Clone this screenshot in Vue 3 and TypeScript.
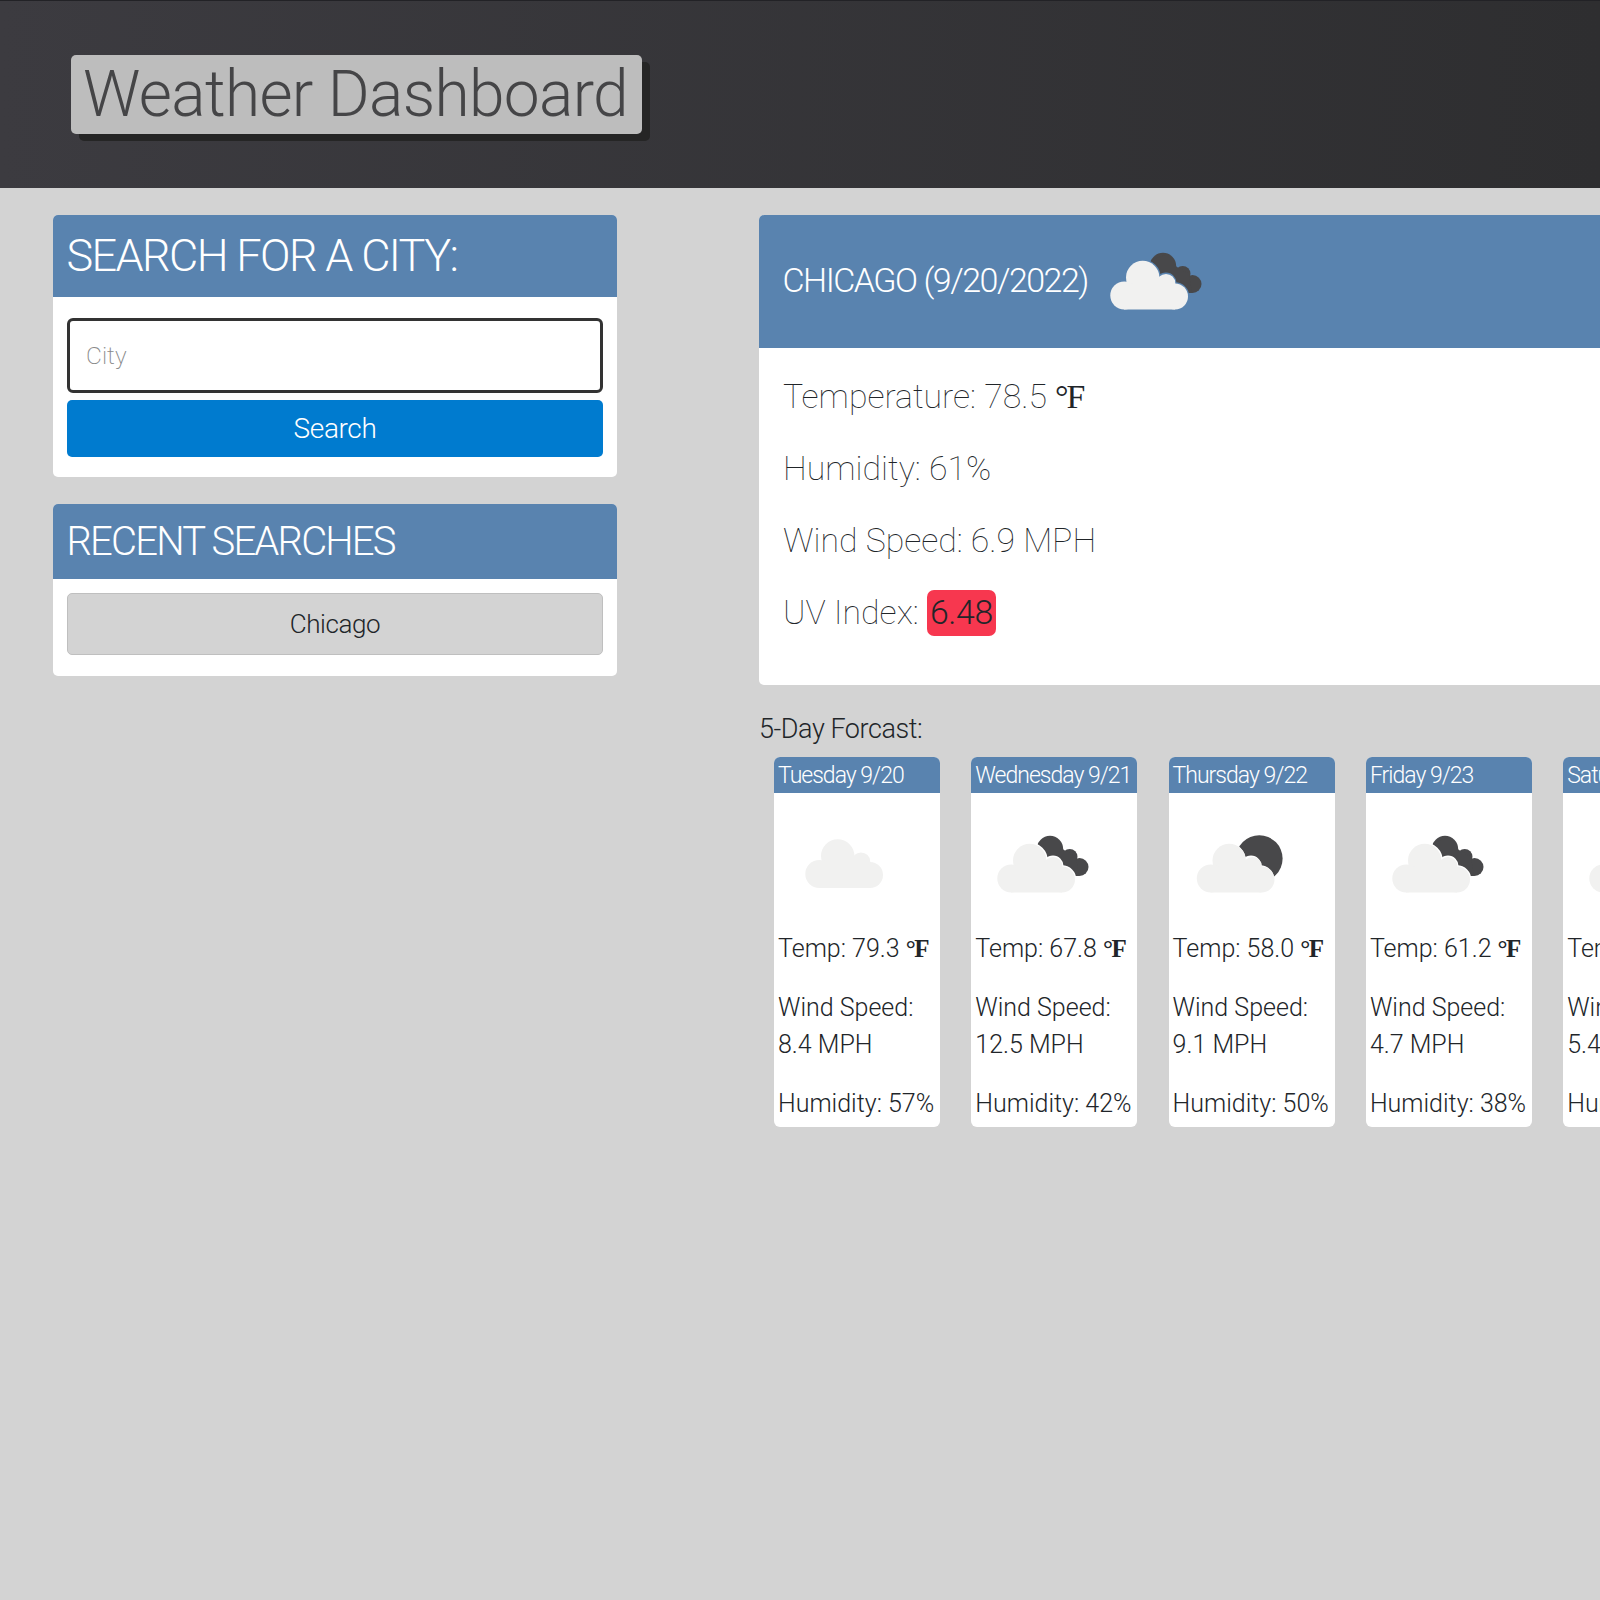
<script setup lang="ts">
type Icon = 'scattered' | 'broken' | 'few'
interface Day { date: string; temp: string; wind: string; humidity: string; icon: Icon }
const days: Day[] = [
  { date: 'Tuesday 9/20', temp: '79.3', wind: '8.4', humidity: '57', icon: 'scattered' },
  { date: 'Wednesday 9/21', temp: '67.8', wind: '12.5', humidity: '42', icon: 'broken' },
  { date: 'Thursday 9/22', temp: '58.0', wind: '9.1', humidity: '50', icon: 'few' },
  { date: 'Friday 9/23', temp: '61.2', wind: '4.7', humidity: '38', icon: 'broken' },
  { date: 'Saturday 9/24', temp: '59.4', wind: '5.4', humidity: '44', icon: 'broken' }
]
const stats = ['Humidity: 61%', 'Wind Speed: 6.9 MPH']
</script>

<template>
  <div class="page">
    <svg class="defs" width="0" height="0" aria-hidden="true">
      <defs>
        <g id="cloud-shape">
          <circle cx="42.7" cy="43" r="16.7" />
          <circle cx="66" cy="48.7" r="9.3" />
          <circle cx="24.3" cy="61" r="14" />
          <circle cx="75" cy="62" r="13" />
          <rect x="24" y="50" width="51" height="25" />
        </g>
        <g id="dark-shape">
          <circle cx="58" cy="36" r="13.2" />
          <circle cx="77.7" cy="43.8" r="7.8" />
          <circle cx="87.5" cy="54" r="9" />
          <path d="M46 30 L60 25 L72 37 L84 44 L87 63 L60 63 Z" />
        </g>
        <mask id="cut-cloud" maskUnits="userSpaceOnUse" x="0" y="0" width="100" height="100">
          <rect x="0" y="0" width="100" height="100" fill="#fff" />
          <use href="#cloud-shape" transform="translate(-5 4.5)" fill="#000" stroke="#000" stroke-width="2.6" />
        </mask>
      </defs>
    </svg>

    <header class="top">
      <h1 class="brand">Weather Dashboard</h1>
    </header>

    <main class="content">
      <aside class="side">
        <section class="card">
          <h2 class="card-head head-search">SEARCH FOR A CITY:</h2>
          <div class="card-body body-search">
            <input class="city" type="text" placeholder="City" />
            <button class="go" type="button">Search</button>
          </div>
        </section>
        <section class="card">
          <h2 class="card-head head-recent">RECENT SEARCHES</h2>
          <div class="card-body body-recent">
            <button class="recent" type="button">Chicago</button>
          </div>
        </section>
      </aside>

      <section class="results">
        <div class="card today">
          <div class="today-head">
            <h3 class="today-title">CHICAGO (9/20/2022)</h3>
            <svg class="icon" viewBox="0 0 100 100">
              <use href="#dark-shape" mask="url(#cut-cloud)" fill="#48484a" />
              <use href="#cloud-shape" transform="translate(-5 4.5)" fill="#f1f1f0" />
            </svg>
          </div>
          <div class="today-body">
            <p class="stat">Temperature: 78.5 <span class="deg deg-large">°F</span></p>
            <p v-for="s in stats" :key="s" class="stat">{{ s }}</p>
            <p class="stat">UV Index: <span class="uv">6.48</span></p>
          </div>
        </div>

        <p class="forecast-label">5-Day Forcast:</p>
        <div class="forecast">
          <article v-for="d in days" :key="d.date" class="day">
            <div class="day-head">{{ d.date }}</div>
            <div class="day-body">
              <svg class="icon day-icon" viewBox="0 0 100 100">
                <template v-if="d.icon === 'broken'">
                  <use href="#dark-shape" mask="url(#cut-cloud)" fill="#48484a" />
                  <use href="#cloud-shape" transform="translate(-5 4.5)" fill="#f1f1f0" />
                </template>
                <template v-else-if="d.icon === 'few'">
                  <circle cx="69.3" cy="45.6" r="23.3" mask="url(#cut-cloud)" fill="#48484a" />
                  <use href="#cloud-shape" transform="translate(-3.5 4.5)" fill="#f1f1f0" />
                </template>
                <use v-else href="#cloud-shape" fill="#f1f1f0" />
              </svg>
              <p class="line">Temp: {{ d.temp }} <span class="deg deg-small">°F</span></p>
              <p class="line">Wind Speed: {{ d.wind }} MPH</p>
              <p class="line">Humidity: {{ d.humidity }}%</p>
            </div>
          </article>
        </div>
      </section>
    </main>
  </div>
</template>

<style scoped>
.page {
  min-height: 1600px;
  background: #d3d3d3;
  font-family: Roboto, serif;
  font-weight: 300;
  color: #212529;
}
.defs { position: absolute; }
.top {
  height: 188px;
  box-sizing: border-box;
  border-top: 1px solid #222226;
  padding: 54px 0 0 71px;
  background: linear-gradient(90deg, #3c3b40, #2e2e30);
}
.brand {
  margin: 0;
  width: 571px;
  height: 79px;
  box-sizing: border-box;
  padding-right: 2px;
  display: flex;
  align-items: center;
  justify-content: center;
  background: #bdbdbd;
  border-radius: 5px;
  box-shadow: 8px 7px 0 #252525;
  color: #454547;
  font-size: 64px;
  font-weight: 300;
  letter-spacing: -0.65px;
  white-space: nowrap;
}
.content {
  display: flex;
  align-items: flex-start;
  padding: 27px 0 0 53px;
  gap: 142px;
}
.side {
  flex: 0 0 564px;
  display: flex;
  flex-direction: column;
  gap: 27px;
}
.card {
  background: #fff;
  border-radius: 5px;
  overflow: hidden;
}
.card-head {
  margin: 0;
  padding-left: 13.5px;
  background: #5983af;
  color: #fff;
  font-weight: 300;
  white-space: nowrap;
}
.head-search { height: 82px; font-size: 45px; line-height: 82px; letter-spacing: -1.6px; }
.head-recent { height: 75px; font-size: 40px; line-height: 75px; letter-spacing: -1.8px; }
.card-body { padding: 0 14px; }
.body-search { padding-top: 21px; padding-bottom: 20px; display: flex; flex-direction: column; gap: 7px; }
.body-recent { padding-top: 14px; padding-bottom: 21px; }
.city {
  box-sizing: border-box;
  width: 100%;
  height: 75px;
  padding: 0 16px;
  border: 3px solid #333;
  border-radius: 6px;
  background: #fff;
  font: 300 24.5px Roboto, serif;
  outline: none;
}
.city::placeholder { color: #8a8a8a; font-weight: 200; }
.go {
  width: 100%;
  height: 57px;
  border: 0;
  border-radius: 5px;
  background: #007bcf;
  color: #fff;
  font: 300 28px Roboto, serif;
  letter-spacing: -0.35px;
}
.recent {
  width: 100%;
  height: 62px;
  border: 1px solid #bfbfbf;
  border-radius: 5px;
  background: #d3d3d3;
  color: #212529;
  font: 300 26px Roboto, serif;
  letter-spacing: -0.4px;
}
.results { flex: 0 0 1000px; }
.today { height: 470px; }
.today-head {
  height: 133px;
  box-sizing: border-box;
  padding: 15px 0 0 23.5px;
  display: flex;
  align-items: flex-start;
  gap: 17px;
  background: #5983af;
  color: #fff;
}
.today-title {
  margin: 30px 0 0;
  font-size: 34px;
  font-weight: 300;
  letter-spacing: -1.5px;
  white-space: nowrap;
}
.icon { width: 100px; height: 100px; flex: none; }
.today-body { padding: 25px 24px 0; }
.stat {
  margin: 0 0 24px;
  font-size: 33.8px;
  line-height: 48px;
  font-weight: 100;
}
.deg {
  font-family: "Liberation Serif", serif;
  color: #212529;
}
.deg-large { font-weight: 400; letter-spacing: -2px; }
.deg-small { font-weight: 700; letter-spacing: -1.5px; }
.uv {
  display: inline-block;
  height: 46px;
  line-height: 46px;
  padding: 0 3px;
  border-radius: 7px;
  background: #f7374f;
  font-weight: 300;
  letter-spacing: -0.3px;
  color: #212529;
}
.forecast-label {
  margin: 24px 0 0;
  font-size: 27px;
  letter-spacing: -0.45px;
  line-height: 40px;
}
.forecast {
  display: flex;
  gap: 31.3px;
  margin: 8px 0 0 15px;
}
.day {
  flex: 0 0 166px;
  background: #fff;
  border-radius: 6px;
  overflow: hidden;
}
.day-head {
  height: 36px;
  line-height: 38px;
  padding-left: 4px;
  background: #5983af;
  color: #fff;
  font-size: 23px;
  letter-spacing: -1px;
  white-space: nowrap;
}
.day-body { padding: 20px 4px 0; font-size: 25px; line-height: 37px; }
.day-icon {
  display: block;
  margin: 0 0 17px 17px;
}
.line {
  margin: 0 0 22px;
  white-space: normal;
}
.line:last-child { margin-bottom: 5px; white-space: nowrap; }
</style>

<style>
html, body { margin: 0; background: #d3d3d3; overflow: hidden; }
</style>
